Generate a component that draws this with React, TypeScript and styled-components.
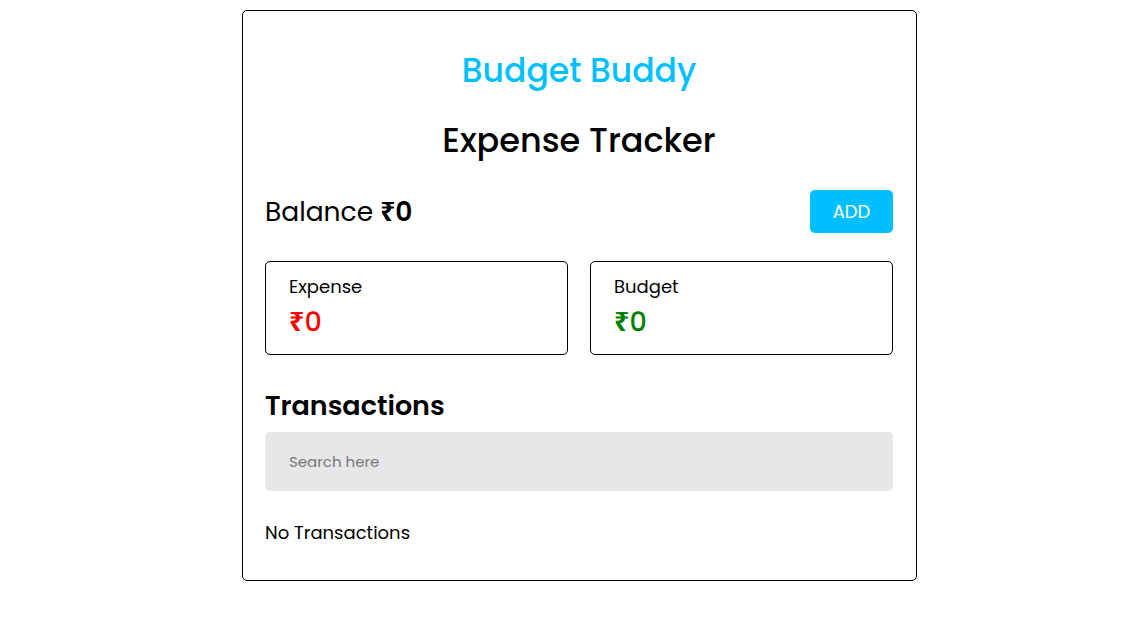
import React from "react";
import styled, { createGlobalStyle } from "styled-components";

const Global = createGlobalStyle`
  html, body { margin: 0; padding: 0; background: #fff; }
  body { font-family: "Poppins", "Open Sans", "DejaVu Sans", sans-serif; color: #000; }
  * { box-sizing: border-box; }
`;

const Page = styled.div`
  padding: 10px 0 0 242px;
`;

const Card = styled.div`
  width: 675px;
  height: 571px;
  border: 1px solid #000;
  border-radius: 5px;
  padding: 0 23px 0 22px;
  display: flex;
  flex-direction: column;
`;

const Brand = styled.h1`
  margin: 36px 0 0;
  text-align: center;
  color: #00bfff;
  font-size: 33px;
  font-weight: 500;
  line-height: 48px;
`;

const Heading = styled.h2`
  margin: 22px 0 0;
  text-align: center;
  font-size: 33.5px;
  font-weight: 500;
  line-height: 48px;
`;

const Rupee = styled.span`
  font-family: "Noto Sans", "DejaVu Sans", sans-serif;
  font-weight: 700;
`;

const BalanceRow = styled.div`
  margin-top: 25px;
  display: flex;
  align-items: center;
  justify-content: space-between;
`;

const Balance = styled.div`
  font-size: 26.5px;
  line-height: 40px;
  b { font-weight: 600; }
`;

const AddButton = styled.button`
  width: 83px;
  height: 43px;
  border: none;
  border-radius: 5px;
  background: #00bfff;
  color: #fff;
  font-family: inherit;
  font-size: 18px;
`;

const Stats = styled.div`
  margin-top: 28px;
  display: grid;
  grid-template-columns: 1fr 1fr;
  gap: 22px;
`;

const StatCard = styled.div`
  height: 94px;
  border: 1px solid #000;
  border-radius: 5px;
  padding: 14px 23px;
`;

const StatLabel = styled.div`
  font-size: 18px;
  line-height: 22px;
`;

const StatValue = styled.div<{ $color: string }>`
  margin-top: 6px;
  font-size: 27px;
  font-weight: 500;
  line-height: 34px;
  color: ${(p) => p.$color};
`;

const SectionTitle = styled.h3`
  margin: 32px 0 0;
  font-size: 27px;
  font-weight: 600;
  line-height: 38px;
`;

const Search = styled.input`
  margin-top: 7px;
  height: 59px;
  width: 100%;
  border: none;
  border-radius: 5px;
  background: #e6e7e9;
  padding: 0 24px;
  font-family: inherit;
  font-size: 15px;
  outline: none;
  &::placeholder { color: #777; }
`;

const Empty = styled.p`
  margin: 31px 0 0;
  font-size: 18px;
  line-height: 22px;
`;

export default function App() {
  return (
    <Page>
      <Global />
      <Card>
        <Brand>Budget Buddy</Brand>
        <Heading>Expense Tracker</Heading>
        <BalanceRow>
          <Balance>
            Balance <b><Rupee>₹</Rupee>0</b>
          </Balance>
          <AddButton>ADD</AddButton>
        </BalanceRow>
        <Stats>
          <StatCard>
            <StatLabel>Expense</StatLabel>
            <StatValue $color="#ff0000"><Rupee>₹</Rupee>0</StatValue>
          </StatCard>
          <StatCard>
            <StatLabel>Budget</StatLabel>
            <StatValue $color="#008000"><Rupee>₹</Rupee>0</StatValue>
          </StatCard>
        </Stats>
        <SectionTitle>Transactions</SectionTitle>
        <Search placeholder="Search here" />
        <Empty>No Transactions</Empty>
      </Card>
    </Page>
  );
}
